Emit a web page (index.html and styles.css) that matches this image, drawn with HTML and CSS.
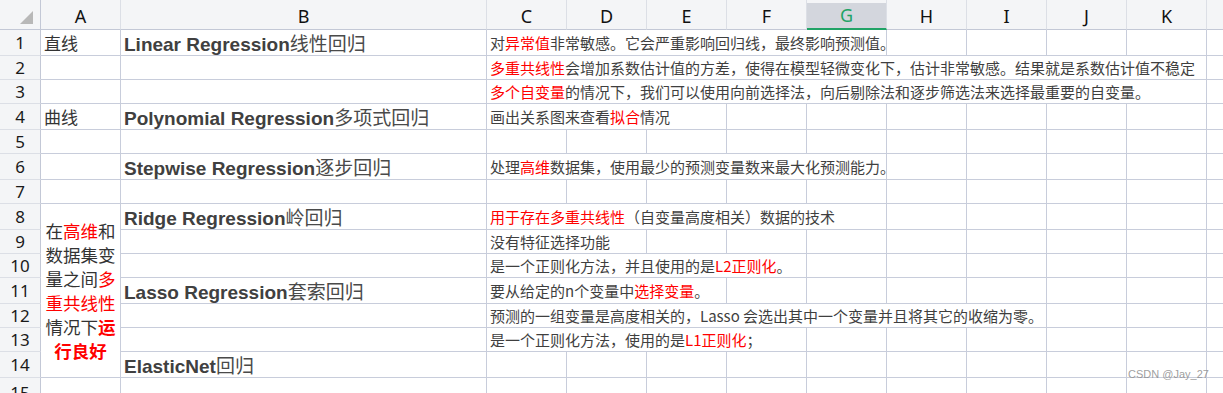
FILE: index.html
```html
<!DOCTYPE html>
<html lang="zh">
<head>
<meta charset="utf-8">
<title>回归</title>
<link rel="stylesheet" href="styles.css">
</head>
<body>
<div class="sheet">
  <!-- header -->
  <div class="hd corner"><svg width="13" height="13" viewBox="0 0 13 13"><polygon points="13,0 13,13 0,13" fill="#b8b8b8"/></svg></div>
  <div class="hd">A</div><div class="hd">B</div><div class="hd">C</div><div class="hd">D</div><div class="hd">E</div><div class="hd">F</div><div class="hd sel">G</div><div class="hd">H</div><div class="hd">I</div><div class="hd">J</div><div class="hd">K</div><div class="hd last"></div>

  <!-- row 1 -->
  <div class="rh">1</div>
  <div class="c a"><span>直线</span></div>
  <div class="c b"><span><span class="en">Linear Regression</span><span class="zh">线性回归</span></span></div>
  <div class="c s5"><span>对<span class="red">异常值</span>非常敏感。它会严重影响回归线，最终影响预测值。</span></div>
  <div class="c"></div><div class="c"></div><div class="c"></div><div class="c"></div><div class="c l"></div>

  <!-- row 2 -->
  <div class="rh">2</div>
  <div class="c"></div><div class="c"></div>
  <div class="c s9"><span><span class="red">多重共线性</span>会增加系数估计值的方差，使得在模型轻微变化下，估计非常敏感。结果就是系数估计值不稳定</span></div>
  <div class="c l"></div>

  <!-- row 3 -->
  <div class="rh">3</div>
  <div class="c"></div><div class="c"></div>
  <div class="c s9"><span><span class="red">多个自变量</span>的情况下，我们可以使用向前选择法，向后剔除法和逐步筛选法来选择最重要的自变量。</span></div>
  <div class="c l"></div>

  <!-- row 4 -->
  <div class="rh">4</div>
  <div class="c a"><span>曲线</span></div>
  <div class="c b"><span><span class="en">Polynomial Regression</span><span class="zh">多项式回归</span></span></div>
  <div class="c s3"><span>画出关系图来查看<span class="red">拟合</span>情况</span></div>
  <div class="c"></div><div class="c"></div><div class="c"></div><div class="c"></div><div class="c"></div><div class="c"></div><div class="c l"></div>

  <!-- row 5 -->
  <div class="rh">5</div>
  <div class="c"></div><div class="c"></div>
  <div class="c"></div><div class="c"></div><div class="c"></div><div class="c"></div><div class="c"></div><div class="c"></div><div class="c"></div><div class="c"></div><div class="c"></div><div class="c l"></div>

  <!-- row 6 -->
  <div class="rh">6</div>
  <div class="c"></div>
  <div class="c b"><span><span class="en">Stepwise Regression</span><span class="zh">逐步回归</span></span></div>
  <div class="c s5"><span>处理<span class="red">高维</span>数据集，使用最少的预测变量数来最大化预测能力。</span></div>
  <div class="c"></div><div class="c"></div><div class="c"></div><div class="c"></div><div class="c l"></div>

  <!-- row 7 -->
  <div class="rh">7</div>
  <div class="c"></div><div class="c"></div>
  <div class="c"></div><div class="c"></div><div class="c"></div><div class="c"></div><div class="c"></div><div class="c"></div><div class="c"></div><div class="c"></div><div class="c"></div><div class="c l"></div>

  <!-- row 8 -->
  <div class="rh">8</div>
  <div class="c merged"><div class="mtext">在<span class="red">高维</span>和<br>数据集变<br>量之间<span class="red">多</span><br><span class="red">重共线性</span><br>情况下<span class="red strong">运</span><br><span class="red strong">行良好</span></div></div>
  <div class="c b"><span><span class="en">Ridge Regression</span><span class="zh">岭回归</span></span></div>
  <div class="c s5"><span><span class="red">用于存在多重共线性</span>（自变量高度相关）数据的技术</span></div>
  <div class="c"></div><div class="c"></div><div class="c"></div><div class="c"></div><div class="c l"></div>

  <!-- row 9 -->
  <div class="rh">9</div>
  <div class="c"></div>
  <div class="c s2"><span>没有特征选择功能</span></div>
  <div class="c"></div><div class="c"></div><div class="c"></div><div class="c"></div><div class="c"></div><div class="c"></div><div class="c"></div><div class="c l"></div>

  <!-- row 10 -->
  <div class="rh">10</div>
  <div class="c"></div>
  <div class="c s4"><span>是一个正则化方法，并且使用的是<span class="red">L2正则化</span>。</span></div>
  <div class="c"></div><div class="c"></div><div class="c"></div><div class="c"></div><div class="c"></div><div class="c l"></div>

  <!-- row 11 -->
  <div class="rh">11</div>
  <div class="c b"><span><span class="en">Lasso Regression</span><span class="zh">套索回归</span></span></div>
  <div class="c s3"><span>要从给定的n个变量中<span class="red">选择变量</span>。</span></div>
  <div class="c"></div><div class="c"></div><div class="c"></div><div class="c"></div><div class="c"></div><div class="c"></div><div class="c l"></div>

  <!-- row 12 -->
  <div class="rh">12</div>
  <div class="c"></div>
  <div class="c s7"><span>预测的一组变量是高度相关的，Lasso 会选出其中一个变量并且将其它的收缩为零。</span></div>
  <div class="c"></div><div class="c"></div><div class="c l"></div>

  <!-- row 13 -->
  <div class="rh">13</div>
  <div class="c"></div>
  <div class="c s4"><span>是一个正则化方法，使用的是<span class="red">L1正则化</span>；</span></div>
  <div class="c"></div><div class="c"></div><div class="c"></div><div class="c"></div><div class="c"></div><div class="c l"></div>

  <!-- row 14 -->
  <div class="rh">14</div>
  <div class="c b"><span><span class="en">ElasticNet</span><span class="zh">回归</span></span></div>
  <div class="c"></div><div class="c"></div><div class="c"></div><div class="c"></div><div class="c"></div><div class="c"></div><div class="c"></div><div class="c"></div><div class="c"></div><div class="c l"></div>

  <!-- row 15 -->
  <div class="rh">15</div>
  <div class="c"></div><div class="c"></div>
  <div class="c"></div><div class="c"></div><div class="c"></div><div class="c"></div><div class="c"></div><div class="c"></div><div class="c"></div><div class="c"></div><div class="c"></div><div class="c l"></div>
</div>
<div class="watermark">CSDN @Jay_27</div>
</body>
</html>
```

FILE: styles.css
```css
* {
  box-sizing: border-box;
  margin: 0;
  padding: 0;
}

html, body {
  width: 1223px;
  height: 393px;
  overflow: hidden;
  background: #ffffff;
}

body {
  position: relative;
  font-family: "Noto Sans CJK SC", sans-serif;
  color: #3f3f3f;
}

.sheet {
  display: grid;
  grid-template-columns: 41px 80px 366px repeat(9, 80px) 1fr;
  grid-template-rows: 30px 26px 24px 24px 26px 24px 26px 24px 26px 24px 24px 26px 24px 24px 26px 30px;
}

/* column headers */
.hd {
  background: #f4f5f7;
  border-right: 1px solid #dcdfe6;
  border-bottom: 1px solid #c3c8d6;
  display: flex;
  align-items: center;
  justify-content: center;
  padding-top: 2px;
  font-family: "Noto Sans", "Open Sans", sans-serif;
  font-size: 18px;
  color: #111111;
}

.hd.corner {
  justify-content: flex-end;
  align-items: flex-end;
  padding: 0 7px 5px 0;
  border-right: 1px solid #c3c8d6;
}

.hd.corner svg {
  display: block;
}

.hd.sel {
  background: linear-gradient(#f4f5f7 0 3px, #d3d6dd 3px);
  border-bottom: 2px solid #21a366;
  color: #21a366;
}

.hd.last {
  border-right: none;
}

/* row headers */
.rh {
  background: #f4f5f7;
  border-right: 1px solid #c3c8d6;
  border-bottom: 1px solid #dcdfe6;
  display: flex;
  align-items: center;
  justify-content: center;
  font-family: "Noto Sans", "Open Sans", sans-serif;
  font-size: 17px;
  color: #1a1a1a;
}

/* body cells */
.c {
  border-right: 1px solid #c8cddb;
  border-bottom: 1px solid #c8cddb;
  display: flex;
  align-items: center;
  padding-left: 3px;
  white-space: nowrap;
  font-size: 15px;
  color: #3f3f3f;
  min-width: 0;
}

.c.l {
  border-right: none;
}

.c.a {
  font-size: 17px;
  color: #333333;
}

.c.b {
  font-size: 19px;
  color: #404040;
}

.c.b .en {
  font-family: "Liberation Sans", Arial, sans-serif;
  font-weight: 700;
}

.c.b .zh {
  font-family: "Noto Sans CJK SC", sans-serif;
  font-weight: 400;
  color: #4a4a4a;
}

.s2 { grid-column: span 2; }
.s3 { grid-column: span 3; }
.s4 { grid-column: span 4; }
.s5 { grid-column: span 5; }
.s7 { grid-column: span 7; }
.s9 { grid-column: span 9; }

.merged {
  grid-row: span 7;
  justify-content: center;
  padding: 0;
}

.mtext {
  text-align: center;
  white-space: nowrap;
  font-size: 17.5px;
  line-height: 24px;
  color: #333333;
}

.red {
  color: #ff0000;
}

.strong {
  font-weight: 700;
}

.watermark {
  position: absolute;
  left: 1128px;
  top: 368px;
  font-family: "Liberation Sans", Arial, sans-serif;
  font-size: 11px;
  color: rgba(140, 140, 140, 0.85);
  white-space: nowrap;
}
```
